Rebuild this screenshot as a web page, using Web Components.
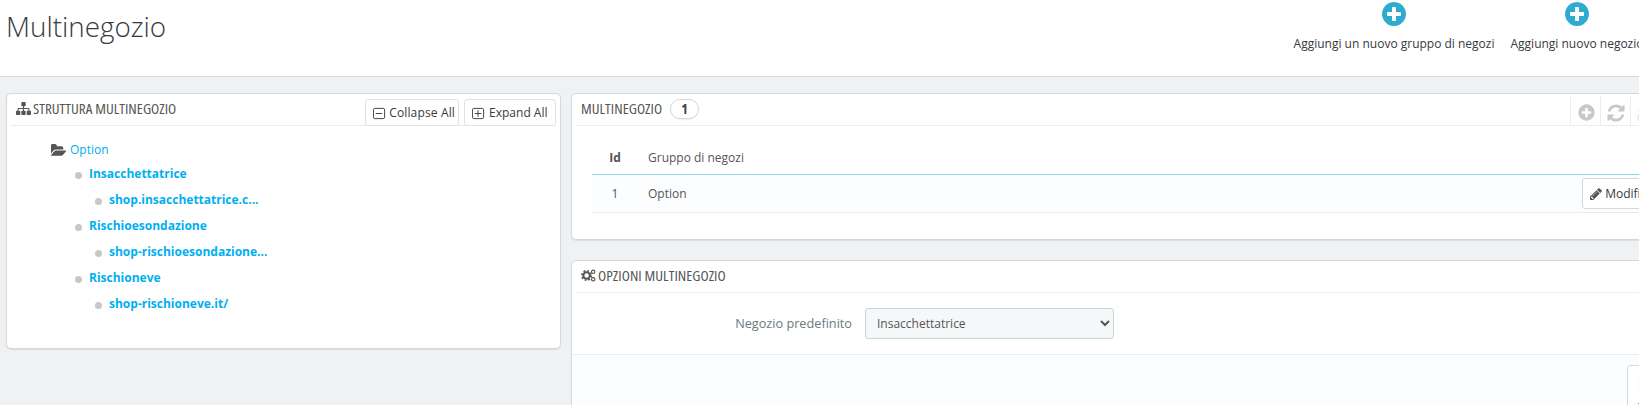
<!DOCTYPE html>
<html lang="it"><head><meta charset="utf-8"><title>Multinegozio</title>
<style>
html{overflow:hidden;height:405px;background:#eff1f2}
body{margin:0;width:1698px;height:405px;overflow:hidden;background:#eff1f2;font:12px/1.4 "Open Sans",sans-serif;color:#555}
</style></head><body>
<ms-header><ms-action>Aggiungi un nuovo gruppo di negozi</ms-action><ms-action>Aggiungi nuovo negozio</ms-action></ms-header>
<ms-layout>
  <ms-panel slot="left" style="--body-pad:13px 0 31px">
    <ms-icon slot="icon" name="sitemap" style="--s:15px"></ms-icon>
    <span slot="title">Struttura multinegozio</span>
    <ms-button slot="actions" icon="minus">Collapse All</ms-button>
    <ms-button slot="actions" icon="plus">Expand All</ms-button>
    <ms-tree>
      <ms-node level="0" folder>Option</ms-node>
      <ms-node level="1">Insacchettatrice</ms-node>
      <ms-node level="2">shop.insacchettatrice.c...</ms-node>
      <ms-node level="1">Rischioesondazione</ms-node>
      <ms-node level="2">shop-rischioesondazione...</ms-node>
      <ms-node level="1">Rischioneve</ms-node>
      <ms-node level="2">shop-rischioneve.it/</ms-node>
    </ms-tree>
  </ms-panel>
  <ms-panel slot="right" style="--body-pad:15px 0 26px">
    <span slot="title">Multinegozio</span>
    <ms-badge slot="title">1</ms-badge>
    <ms-tools slot="tools"></ms-tools>
    <ms-table></ms-table>
  </ms-panel>
  <ms-panel slot="right">
    <ms-icon slot="icon" name="cogs" style="--s:15px"></ms-icon>
    <span slot="title">Opzioni multinegozio</span>
    <ms-form></ms-form>
  </ms-panel>
</ms-layout>
<script>
const P={
 plus:'M1344 960v-128q0-26-19-45t-45-19h-256v-256q0-26-19-45t-45-19h-128q-26 0-45 19t-19 45v256h-256q-26 0-45 19t-19 45v128q0 26 19 45t45 19h256v256q0 26 19 45t45 19h128q26 0 45-19t19-45v-256h256q26 0 45-19t19-45zm320-64q0 209-103 385.5t-279.5 279.5-385.5 103-385.5-103-279.5-279.5-103-385.5 103-385.5 279.5-279.5 385.5-103 385.5 103 279.5 279.5 103 385.5z',
 refresh:'M1639 1056q0 5-1 7-64 268-268 434.5t-478 166.5q-146 0-282.5-55t-243.5-157l-129 129q-19 19-45 19t-45-19-19-45v-448q0-26 19-45t45-19h448q26 0 45 19t19 45-19 45l-137 137q71 66 161 102t187 36q134 0 250-65t186-179q11-17 53-117 8-23 30-23h192q13 0 22.5 9.5t9.5 22.5zm25-800v448q0 26-19 45t-45 19h-448q-26 0-45-19t-19-45 19-45l138-138q-148-137-349-137-134 0-250 65t-186 179q-11 17-53 117-8 23-30 23h-199q-13 0-22.5-9.5t-9.5-22.5v-7q65-268 270-434.5t480-166.5q146 0 284 55.5t245 156.5l130-129q19-19 45-19t45 19 19 45z',
 pencil:'M491 1536l91-91-235-235-91 91v107h128v128h107zm523-928q0-22-22-22-10 0-17 7l-542 542q-7 7-7 17 0 22 22 22 10 0 17-7l542-542q7-7 7-17zm-54-192l416 416-832 832h-416v-416zm683 96q0 53-37 90l-166 166-416-416 166-165q36-38 90-38 53 0 91 38l235 234q37 39 37 91z',
 sitemap:'M1792 1248v320q0 40-28 68t-68 28h-320q-40 0-68-28t-28-68v-320q0-40 28-68t68-28h96v-192h-512v192h96q40 0 68 28t28 68v320q0 40-28 68t-68 28h-320q-40 0-68-28t-28-68v-320q0-40 28-68t68-28h96v-192h-512v192h96q40 0 68 28t28 68v320q0 40-28 68t-68 28h-320q-40 0-68-28t-28-68v-320q0-40 28-68t68-28h96v-192q0-52 38-90t90-38h512v-192h-96q-40 0-68-28t-28-68v-320q0-40 28-68t68-28h320q40 0 68 28t28 68v320q0 40-28 68t-68 28h-96v192h512q52 0 90 38t38 90v192h96q40 0 68 28t28 68z',
 folder:'M1815 952q0 31-31 66l-336 396q-43 51-120.5 86.5t-143.5 35.5h-1088q-34 0-60.5-13t-26.5-43q0-31 31-66l336-396q43-51 120.5-86.5t143.5-35.5h1088q34 0 60.5 13t26.5 43zm-343-344v160h-832q-94 0-197 47.5t-164 119.5l-337 396-5 6q0-4-.5-12.5t-.5-12.5v-960q0-92 66-158t158-66h320q92 0 158 66t66 158v32h544q92 0 158 66t66 158z'
};
const svg=(n)=>{
 if(n==='cogs')return `<svg viewBox="0 0 32 32" width="100%" height="100%"><circle cx="12" cy="16" r="7" fill="none" stroke="currentColor" stroke-width="4.5"/><circle cx="12" cy="16" r="10.2" fill="none" stroke="currentColor" stroke-width="3.4" stroke-dasharray="4 4"/><g fill="none" stroke="currentColor" stroke-width="2.4"><circle cx="26" cy="8" r="3.6"/><circle cx="26" cy="24" r="3.6"/></g></svg>`;
 if(n==='minus'||n==='plussq')return `<svg viewBox="0 0 14 14" width="100%" height="100%" fill="none" stroke="currentColor" stroke-width="1"><rect x=".5" y="1.5" width="12" height="11" rx="1.5"/><path d="M3 7h7${n==='plussq'?'M6.5 3.5v7':''}"/></svg>`;
 const w=n==='folder'?1920:1792;
 return `<svg viewBox="0 0 ${w} 1792" width="100%" height="100%"><path fill="currentColor" d="${P[n]}"/></svg>`;
};
function def(tag,css,html){
 customElements.define(tag,class extends HTMLElement{
  constructor(){super();this.attachShadow({mode:'open'})}
  connectedCallback(){this.shadowRoot.innerHTML=`<style>${css}</style>`+(typeof html==='function'?html(this):html);}
 });
}
const COND='"Open Sans",sans-serif';
def('ms-icon',`:host{display:inline-block;width:var(--s,14px);height:var(--s,14px);flex:none;color:inherit;line-height:0}`,e=>svg(e.getAttribute('name')));
def('ms-header',`:host{display:flex;justify-content:space-between;height:76px;background:#fff;border-bottom:1px solid #d3d8db;box-sizing:content-box}
h1{margin:0;padding:9px 0 0 6px;font:300 27.8px/34px "Open Sans",sans-serif;color:#363a41}
.t{display:flex;gap:16px;padding-right:54.5px}`,`<h1>Multinegozio</h1><div class="t"><slot></slot></div>`);
def('ms-action',`:host{display:flex;flex-direction:column;align-items:center;padding-top:2px;font-size:12px;line-height:16px;color:#363a41;white-space:nowrap}
ms-icon{--s:28px;margin:-2px 0 7px;color:#2eaccf}.l{margin-top:1px}`,`<ms-icon name="plus"></ms-icon><span class="l"><slot></slot></span>`);
def('ms-layout',`:host{display:grid;grid-template-columns:566px 1132px;padding-top:16px}
.c{display:flex;flex-direction:column;gap:20px;min-width:0}.l{padding:0 5px 0 6px}.r{padding:0 6px 0 5px}`,`<div class="c l"><slot name="left"></slot></div><div class="c r"><slot name="right"></slot></div>`);
def('ms-panel',`:host{display:block;background:#fff;border:1px solid #d3d8db;border-radius:5px;box-shadow:0 1px 1px rgba(0,0,0,.08);box-sizing:border-box}
.h{display:flex;align-items:stretch;height:32px;box-sizing:border-box;margin:0 4px;border-bottom:1px solid #eaedef;position:relative}
.tt{display:flex;align-items:center;gap:2px;padding:0 0 2px 5px;font:15px/1 ${COND};font-stretch:75%;letter-spacing:.05px;text-transform:uppercase;color:#555;white-space:nowrap}
.ti{display:flex;align-items:center;gap:8px}
.a{margin-left:auto;display:flex;gap:5px;align-items:flex-end;margin-bottom:-1px;padding-top:4px}
.b{padding:var(--body-pad,0)}`,
`<div class="h"><div class="tt"><slot name="icon"></slot><span class="ti"><slot name="title"></slot></span></div><div class="a"><slot name="actions"></slot></div><slot name="tools"></slot></div><div class="b"><slot></slot></div>`);
def('ms-button',`:host{display:flex;align-items:center;gap:3px;height:27px;box-sizing:border-box;padding:1px 3px 0 7px;background:#fff;border:1px solid #dfe3e5;border-radius:3px;color:#363a41;font-size:12px;letter-spacing:.15px;white-space:nowrap}
:host([icon="plus"]){padding:1px 7.5px 0 7px;gap:4px;letter-spacing:0}
ms-icon{--s:13px}`,e=>`<ms-icon name="${e.getAttribute('icon')==='plus'?'plussq':'minus'}"></ms-icon><slot></slot>`);
def('ms-badge',`:host{display:inline-flex;align-items:center;justify-content:center;width:29px;height:20px;box-sizing:border-box;border:1px solid #d3d8db;border-radius:10px;font:700 14px/1 ${COND};font-stretch:75%;color:#444;box-shadow:0 1px 1px rgba(0,0,0,.06)}`,`<slot></slot>`);
def('ms-tools',`:host{margin-left:auto;display:flex;padding:3px 27px 0 0;color:#c8c8c8}
.b{width:30px;box-sizing:border-box;border-left:1px solid #eaedef;display:flex;align-items:center;justify-content:center;padding:3px 0 0 1px}
ms-icon{--s:20px}ms-icon.p{--s:19px}ms-icon.f{color:#ece9d8}`,`<div class="b"><ms-icon class="p" name="plus"></ms-icon></div><div class="b"><ms-icon name="refresh"></ms-icon></div><div class="b"><ms-icon class="f" name="refresh"></ms-icon></div>`);
def('ms-tree',`:host{display:block}`,`<slot></slot>`);
def('ms-node',`:host{display:flex;align-items:center;height:26px;white-space:nowrap;color:#00aff0;font-weight:700;font-size:12px}
:host([level="0"]){height:22px;padding-left:44px;font-weight:400;gap:3px}
:host([level="1"]){padding-left:68px}:host([level="2"]){padding-left:88px}
.d{width:7px;height:7px;border-radius:50%;background:#c7c7c7;margin-right:7px;margin-top:2px}
ms-icon{--s:15px;color:#555;width:16px}`,
e=>e.hasAttribute('folder')?`<ms-icon name="folder"></ms-icon><slot></slot>`:`<span class="d"></span><slot></slot>`);
def('ms-table',`:host{display:block;margin:0 19px 0 20px}
.r{display:grid;grid-template-columns:46px 1fr auto;align-items:center}
.th{height:34px;border-bottom:1px solid #96d4ef;color:#555;padding-top:2px;box-sizing:border-box}
.th b{text-align:center;font-weight:700}.th span{padding-left:10px}
.tr{height:37px;background:#fcfdfe;border-bottom:1px solid #eaedef;color:#555;box-sizing:content-box}
.tr i,.tr span{padding-top:2px}
.tr i{font-style:normal;text-align:center}.tr span{padding-left:10px}
button{all:unset;display:flex;align-items:center;gap:2px;height:31px;box-sizing:border-box;padding:0 12px 0 6px;margin-right:6px;background:#fff;border:1px solid #d3d8db;border-radius:3px;color:#363a41;font:12px "Open Sans",sans-serif}
ms-icon{--s:14px;color:#555}`,
`<div class="r th"><b>Id</b><span>Gruppo di negozi</span></div><div class="r tr"><i>1</i><span>Option</span><button><ms-icon name="pencil"></ms-icon>Modifica</button></div>`);
def('ms-form',`:host{display:block}
.f{display:flex;align-items:center;gap:13px;padding:15px 0;border-bottom:1px solid #eaedef}
label{width:280px;text-align:right;color:#6c7a80;font-size:12.7px}
select{width:249px;height:31px;box-sizing:border-box;padding:0 7px;background:#f5f8f9;border:1px solid #c7d6db;border-radius:3px;color:#555;font:12px "Open Sans",sans-serif}
.ft{background:#fcfdfe;height:60px;padding:10px 4px 0 0;display:flex;justify-content:flex-end}
.s{width:60px;height:70px;box-sizing:border-box;background:#fff;border:1px solid #d3d8db;border-radius:3px;padding:10px 0 0 10px}
.s svg{display:block}`,
`<div class="f"><label for="s">Negozio predefinito</label><select id="s"><option>Insacchettatrice</option></select></div><div class="ft"><div class="s"><svg width="40" height="28"><rect width="34" height="18" fill="#ffffd8"/><rect y="27" width="2" height="1" fill="#d9822b"/></svg></div></div>`);
</script>
</body></html>
